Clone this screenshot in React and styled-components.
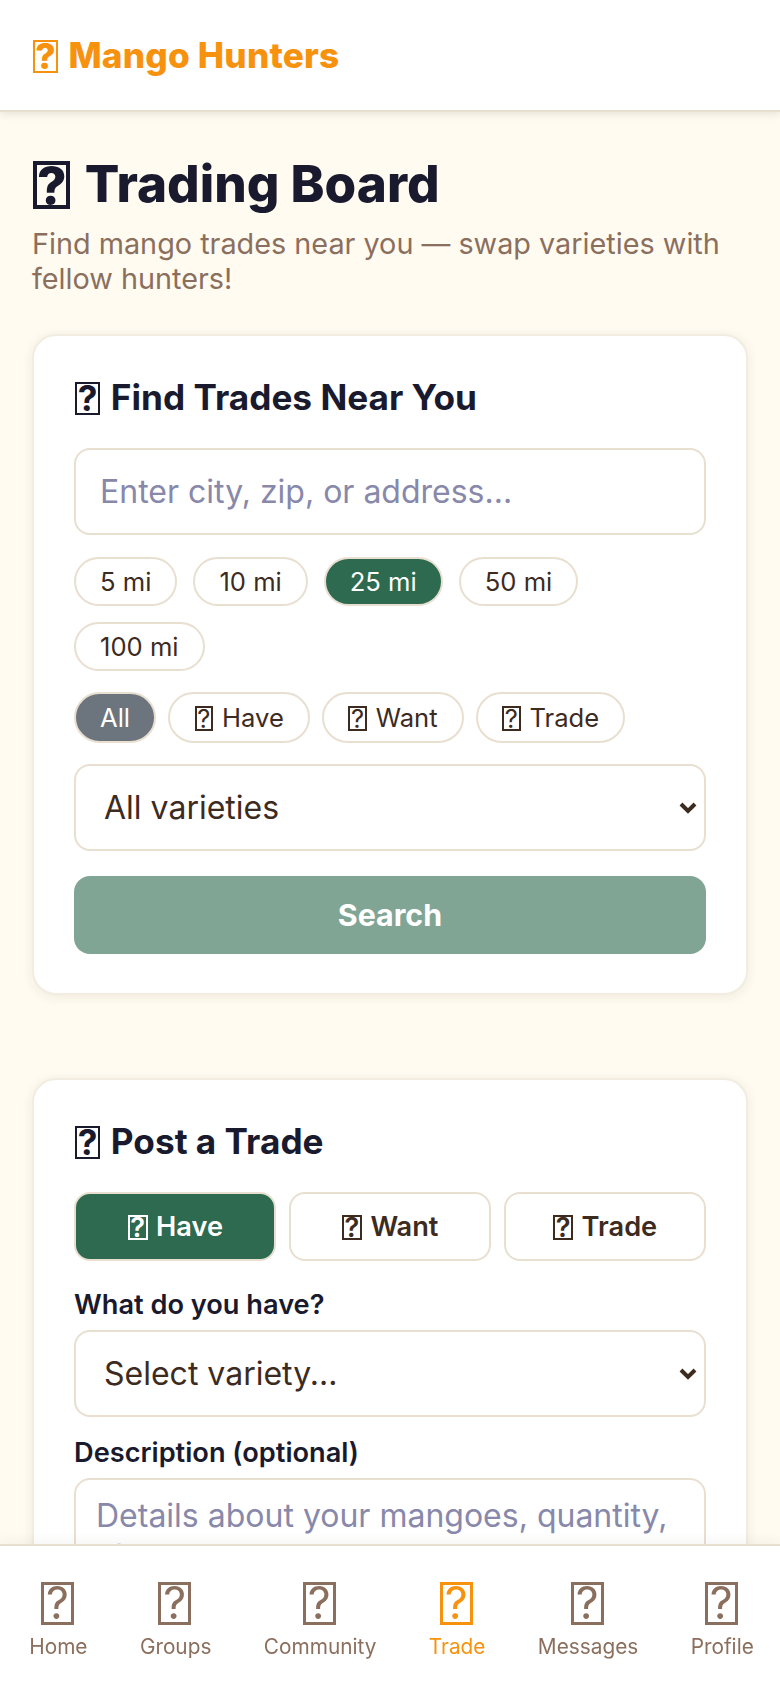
import React from 'react';
import styled, { createGlobalStyle } from 'styled-components';

const Global = createGlobalStyle`
  * { box-sizing: border-box; }
  html, body { margin: 0; padding: 0; height: 1688px; overflow: hidden; }
  body { background: #fffbf0; font-family: Inter, sans-serif; color: #3d2b1f; }
`;

const Tofu = styled.span.attrs({ children: '?' })`
  display: inline-flex;
  justify-content: center;
  align-items: center;
  width: 0.73em;
  height: 0.95em;
  margin: 0 0.06em 0 0.02em;
  border: 0.08em solid currentColor;
  vertical-align: -0.03em;
  line-height: 1;
`;

const Page = styled.div`
  height: 1688px;
  overflow: hidden;
`;

const Header = styled.header`
  height: 112px;
  padding: 0 32px;
  display: flex;
  align-items: center;
  background: #fff;
  box-shadow: 0 2px 8px rgba(61, 43, 31, 0.12);
  border-bottom: 2px solid #e8dfd0;
`;

const Logo = styled.div`
  font-size: 35.2px;
  font-weight: 800;
  letter-spacing: 0.2px;
  color: #f7920f;
`;

const Main = styled.main`
  padding: 40px 32px 0;
`;

const Title = styled.h1`
  margin: 0 0 13px;
  font-size: 51.2px;
  line-height: 62px;
  font-weight: 800;
  color: #1a1a2e;
`;

const Subtitle = styled.p`
  margin: 0 0 38px;
  font-size: 28.8px;
  line-height: 34.5px;
  color: #8b6f5e;
`;

const Card = styled.section`
  background: #fff;
  border: 2px solid #f2ece1;
  border-radius: 24px;
  padding: 37px 40px 39px;
  margin-bottom: 83px;
  box-shadow: 0 2px 12px rgba(61, 43, 31, 0.08);
`;

const CardTitle = styled.h2`
  margin: 0 0 27px;
  font-size: 35.2px;
  line-height: 48px;
  font-weight: 700;
  color: #1a1a2e;
`;

const TextInput = styled.input`
  display: block;
  width: 100%;
  height: 87px;
  padding: 0 24px;
  border: 2px solid #e8dfd0;
  border-radius: 16px;
  background: #fff;
  font: 400 32px Inter, sans-serif;
  color: #3d2b1f;
  &::placeholder { color: #8888aa; opacity: 1; }
`;

const SelectWrap = styled.div`
  position: relative;
`;

const Select = styled.select`
  display: block;
  width: 100%;
  height: 87px;
  padding: 0 24px 0 28px;
  border: 2px solid #e8dfd0;
  border-radius: 16px;
  background: #fff;
  font: 400 32px Inter, sans-serif;
  color: #3d2b1f;
  appearance: none;
`;

const Chevron = styled.svg`
  position: absolute;
  right: 9px;
  top: 37px;
  width: 18px;
  height: 13px;
  pointer-events: none;
`;

const PillRow = styled.div`
  display: flex;
  flex-wrap: wrap;
  gap: ${p => p.$gap}px;
  margin: ${p => p.$top}px 0 ${p => p.$bottom}px;
`;

const Pill = styled.button`
  height: ${p => p.$h}px;
  padding: 0 24px;
  border: 2px solid #e8dfd0;
  border-radius: 999px;
  background: ${p => p.$bg || '#fff'};
  color: ${p => (p.$bg ? '#fff' : '#3d2b1f')};
  font: 400 25.6px Inter, sans-serif;
`;

const SearchButton = styled.button`
  display: block;
  width: 100%;
  height: 78px;
  margin-top: 25px;
  border: 0;
  border-radius: 16px;
  background: #81a595;
  color: #fff;
  font: 700 30.4px Inter, sans-serif;
`;

const Tabs = styled.div`
  display: flex;
  gap: 12.8px;
  margin-bottom: 27px;
`;

const Tab = styled.button`
  flex: 1;
  height: 69px;
  border: 2px solid #e8dfd0;
  border-radius: 16px;
  background: ${p => (p.$active ? '#2d6a4f' : '#fff')};
  color: ${p => (p.$active ? '#fff' : '#3d2b1f')};
  font: 600 27.2px Inter, sans-serif;
`;

const Label = styled.label`
  display: block;
  margin-bottom: 8px;
  font-size: 27.2px;
  line-height: 34px;
  font-weight: 600;
  color: #1a1a2e;
`;

const Field = styled.div`
  margin-bottom: 19px;
`;

const TextArea = styled.textarea`
  display: block;
  width: 100%;
  height: 140px;
  padding: 16px 20px;
  border: 2px solid #e8dfd0;
  border-radius: 16px;
  resize: none;
  font: 400 32px Inter, sans-serif;
  &::placeholder { color: #8888aa; opacity: 1; }
`;

const Nav = styled.nav`
  position: fixed;
  left: 0;
  right: 0;
  bottom: 0;
  height: 144px;
  padding: 1px 0 0 3px;
  display: flex;
  justify-content: space-around;
  align-items: center;
  background: #fff;
  border-top: 2px solid #e8dfd0;
  box-shadow: 0 -2px 12px rgba(61, 43, 31, 0.06);
`;

const NavItem = styled.div`
  display: flex;
  flex-direction: column;
  align-items: center;
  gap: 6px;
  color: ${p => (p.$active ? '#f7920f' : '#8b6f5e')};
`;

const NavIcon = styled.span`
  font-size: 44.8px;
  line-height: 52px;
`;

const NavLabel = styled.span`
  font-size: 20.8px;
  line-height: 26px;
`;

const navItems = ['Home', 'Groups', 'Community', 'Trade', 'Messages', 'Profile'];

const VarietySelect = ({ text }) => (
  <SelectWrap>
    <Select defaultValue=""><option value="">{text}</option></Select>
    <Chevron viewBox="0 0 18 13" aria-hidden="true">
      <path d="M2 3 L9 10 L16 3" fill="none" stroke="#3d2b1f" strokeWidth="4" />
    </Chevron>
  </SelectWrap>
);

export default function App() {
  return (
    <Page>
      <Global />
      <Header><Logo><Tofu /> Mango Hunters</Logo></Header>
      <Main>
        <Title><Tofu /> Trading Board</Title>
        <Subtitle>Find mango trades near you — swap varieties with fellow hunters!</Subtitle>
        <Card>
          <CardTitle><Tofu /> Find Trades Near You</CardTitle>
          <TextInput placeholder="Enter city, zip, or address..." />
          <PillRow $gap={16} $top={22} $bottom={21}>
            <Pill $h={49}>5 mi</Pill>
            <Pill $h={49}>10 mi</Pill>
            <Pill $h={49} $bg="#2d6a4f">25 mi</Pill>
            <Pill $h={49}>50 mi</Pill>
            <Pill $h={49}>100 mi</Pill>
          </PillRow>
          <PillRow $gap={12} $top={0} $bottom={21}>
            <Pill $h={51} $bg="#6c757d">All</Pill>
            <Pill $h={51}><Tofu /> Have</Pill>
            <Pill $h={51}><Tofu /> Want</Pill>
            <Pill $h={51}><Tofu /> Trade</Pill>
          </PillRow>
          <VarietySelect text="All varieties" />
          <SearchButton>Search</SearchButton>
        </Card>
        <Card>
          <CardTitle><Tofu /> Post a Trade</CardTitle>
          <Tabs>
            <Tab $active><Tofu /> Have</Tab>
            <Tab><Tofu /> Want</Tab>
            <Tab><Tofu /> Trade</Tab>
          </Tabs>
          <Field>
            <Label>What do you have?</Label>
            <VarietySelect text="Select variety..." />
          </Field>
          <Field>
            <Label>Description (optional)</Label>
            <TextArea placeholder="Details about your mangoes, quantity, etc." />
          </Field>
        </Card>
      </Main>
      <Nav>
        {navItems.map(n => (
          <NavItem key={n} $active={n === 'Trade'}>
            <NavIcon><Tofu /></NavIcon>
            <NavLabel>{n}</NavLabel>
          </NavItem>
        ))}
      </Nav>
    </Page>
  );
}
